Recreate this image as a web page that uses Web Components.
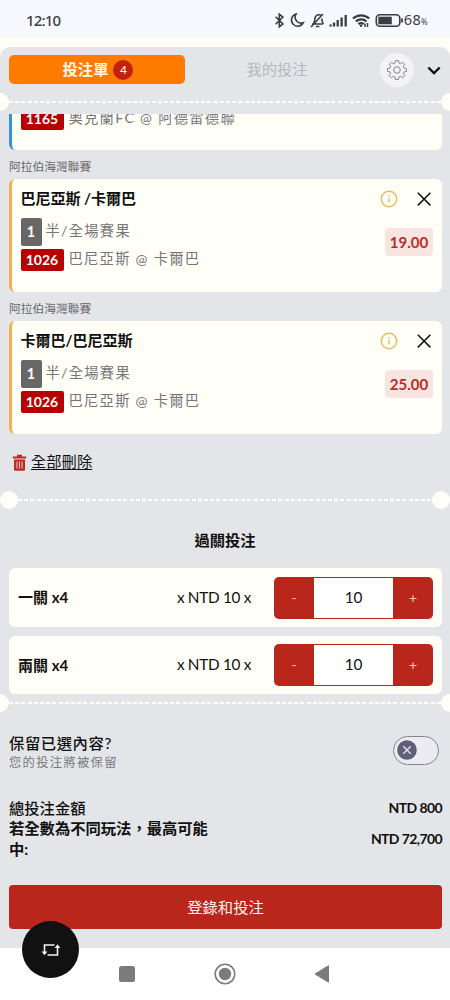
<!DOCTYPE html>
<html lang="zh-Hant">
<head>
<meta charset="utf-8">
<title>投注單</title>
<style>
html,body{margin:0;padding:0}
body{width:450px;height:1000px;overflow:hidden;background:#fffef7;font-family:Lato,"Noto Sans CJK TC",sans-serif;color:#111;font-size:15.3px}
</style>
</head>
<body>
<bet-app></bet-app>
<script>
const define=(name,html)=>{
  const t=document.createElement('template');
  t.innerHTML='<style>*{box-sizing:border-box}:host{display:block;box-sizing:border-box;white-space:nowrap}svg{display:block}</style>'+html;
  customElements.define(name,class extends HTMLElement{
    constructor(){super();this.attachShadow({mode:'open'}).appendChild(t.content.cloneNode(true));}
  });
};

define('status-bar',`<style>
:host{display:flex;height:38px;background:#f8f9fe;padding:2px 22px 0 26px;align-items:center;justify-content:space-between;font:500 15px/20px "Noto Sans",sans-serif;letter-spacing:-.8px;color:#3c3d43}
.p{font:14.5px/20px "Noto Sans",sans-serif;letter-spacing:.3px;margin-left:-2px}.p small{font-size:8px}
.r{display:flex;align-items:center}
</style><span>12:10</span>
<div class="r"><svg width="132" height="20" viewBox="270 10.500 132 20" fill="none" stroke="#3c3d43" stroke-width="1.600">
<path d="M271.6 17.2l7.3 7.2-3.6 3V14.6l3.6 3-7.3 7.2"/>
<path d="M292 14.6a6.2 6.2 0 1 0 7.3 8.6 6 6 0 0 1-7.3-8.6z"/>
<path d="M308 24.500h11M309.500 24c1.5-1.5 1-5 2-6.800a3.900 3.900 0 0 1 6-.9M317.800 19c.2 2 .2 3.900 1.600 5.500M311.800 27h3.600M307 27.500l12-13"/>
<path stroke-width="2.300" d="M326.600 25v2M330 23v4M333.700 20.500V27M337.600 18v9M341.700 15.500V27"/>
<path stroke-width="2.200" d="M349 19c4.600-4.300 11.600-4.300 16.200 0M351.800 22c3-2.800 7.800-2.800 10.700 0M354.400 24.700c1.600-1.400 3.700-1.400 5.300 0"/>
<path stroke-width="1.500" d="M361 24v3.500M363.500 23.500v4"/><circle cx="357" cy="26.300" r="1.200" fill="#3c3d43" stroke="none"/>
<rect x="372.300" y="15.300" width="23.500" height="11.400" rx="3.500"/><path d="M374.300 17.200h13.500v7.600h-13.500z" fill="#3c3d43" stroke="none"/><path d="M398 19v4" stroke-width="1.800"/></svg>
<span class="p">68<small>%</small></span></div>`);

define('tear-line',`<style>
:host{display:flex;align-items:center;justify-content:space-between;height:18px}
i{width:18px;height:18px;border-radius:50%;background:#fffef7;flex:none}
i:first-of-type{margin-left:-9px}i:last-of-type{margin-right:-9px}
:host([inset]) i{margin:0}
b{flex:1;height:2.500px;background:repeating-linear-gradient(90deg,#fffef8 0 4px,transparent 4px 6.200px)}
</style><i></i><b></b><i></i>`);

define('tab-bar',`<style>
:host{display:flex;height:46px;padding:8px 9px 0 9px;align-items:flex-start}
.a{width:176px;height:29px;border-radius:5px;background:#ff7b00;color:#fffaf0;font-weight:700;display:flex;align-items:center;justify-content:center;gap:5px;padding-left:2px}
.a span{margin-top:-1px;line-height:24px}
.a b{width:20px;height:20px;border-radius:50%;background:#c3200f;font-size:12px;line-height:20px;text-align:center;font-weight:400}
.m{width:184px;text-align:center;color:#b6b8bc;line-height:29px}
.g{width:34px;height:34px;margin:-2px 0 0 11px;border-radius:50%;background:#f3f3f5;display:flex;align-items:center;justify-content:center}
.v{margin:9px 0 0 13px}
</style><div class="a"><span>投注單</span><b>4</b></div><div class="m">我的投注</div>
<div class="g"><svg width="22" height="22" viewBox="-11 -11 22 22" fill="none" stroke="#85868a" stroke-width="1"><path id="gear"/><circle r="3.300"/></svg></div>
<svg class="v" width="14" height="13" viewBox="0 0 14 13" fill="none" stroke="#111" stroke-width="2.400"><path d="M1.300 3.500 7 9l5.700-5.500"/></svg>`);

define('league-name',`<style>:host{height:29px;padding:4px 0 0 9px;font-size:11.750px;line-height:26px;color:#66676a}</style><slot></slot>`);

const matchStyle=`.l{display:flex;align-items:center;color:#77767a;font-size:14.300px;letter-spacing:1.250px;height:22px}
.l.q{height:28px;margin-bottom:3px}
.t{line-height:20px;margin-top:-3px}
.k{background:#676767;color:#fff;font-weight:700;letter-spacing:0;border-radius:2px;width:21px;height:28px;line-height:28px;text-align:center;margin-right:4px}
.n{background:#b90000;color:#fff;font-weight:700;letter-spacing:0;border-radius:2px;width:43px;height:22px;line-height:22px;text-align:center;margin-right:5px;font-size:14px}`;

define('bet-card',`<style>
:host{height:113px;margin:0 8px 0 9px;border-radius:6px;background:#fffef7;border-left:3px solid #efb152;padding:8px 9px 0 8.500px;display:flex;justify-content:space-between}
h3{margin:0 0 9px;font-size:15.100px;letter-spacing:-.1px;line-height:22px;font-weight:700;color:#111}
${matchStyle}
.r{display:flex;flex-direction:column;align-items:flex-end}
.i{display:flex;gap:17px;align-items:center;height:23px}
.o{margin-top:18px;width:48px;height:28px;border-radius:4px;background:#f8e5e1;color:#b72d28;font-weight:700;font-size:15px;line-height:28px;text-align:center}
</style><div><h3><slot name="pick"></slot></h3>
<div class="l q"><span class="k">1</span><span class="t"><slot name="market"></slot></span></div>
<div class="l"><span class="n"><slot name="no"></slot></span><span class="t"><slot></slot></span></div></div>
<div class="r"><div class="i"><svg width="18" height="18" viewBox="0 0 18 18" fill="none" stroke="#e6bd67" stroke-width="1.500"><circle cx="9" cy="9" r="7.700"/><path d="M9 8.200v4.300M9 5.300v1.500"/></svg><svg width="18" height="18" viewBox="0 0 18 18" stroke="#111" stroke-width="1.500"><path d="M2.800 2.800l12.600 12.600M15.400 2.800 2.800 15.400"/></svg></div><div class="o"><slot name="odds"></slot></div></div>`);

define('scrolled-card',`<style>
:host{display:flex;align-items:flex-start;height:36px;margin:0 8px 0 9px;border-radius:0 0 6px 6px;background:#fffef7;border-left:3px solid #3991d0;padding-left:8.500px}
${matchStyle}
.l{margin-top:-6px}
</style><div class="l"><span class="n"><slot name="no"></slot></span><span class="t"><slot></slot></span></div>`);

define('bet-list',`<style>
:host{height:377px;overflow:hidden}
.del{display:flex;gap:4px;align-items:center;padding:0 0 0 12px;height:24px;margin-top:16px;text-decoration:underline;text-underline-offset:2px;color:#111}
.del span{margin-top:-3px;line-height:24px}
</style>
<scrolled-card><span slot="no">1165</span>奧克蘭FC @ 阿德雷德聯</scrolled-card>
<league-name>阿拉伯海灣聯賽</league-name>
<bet-card><span slot="pick">巴尼亞斯 /卡爾巴</span><span slot="market">半/全場賽果</span><span slot="no">1026</span>巴尼亞斯 @ 卡爾巴<span slot="odds">19.00</span></bet-card>
<league-name>阿拉伯海灣聯賽</league-name>
<bet-card><span slot="pick">卡爾巴/巴尼亞斯</span><span slot="market">半/全場賽果</span><span slot="no">1026</span>巴尼亞斯 @ 卡爾巴<span slot="odds">25.00</span></bet-card>
<div class="del"><svg width="15" height="17" viewBox="0 0 15 17"><path d="M.8 2.600h4.200V.8h5v1.800h4.200v2H.8zM2 5.500h11V15.500a1.200 1.200 0 0 1-1.200 1.200H3.200A1.200 1.200 0 0 1 2 15.500z" fill="#c02a24"/><path d="M5 7.500v7M7.500 7.500v7M10 7.500v7" stroke="#f0c8c4" stroke-width="1"/></svg><span>全部刪除</span></div>`);

define('stake-row',`<style>
:host{display:flex;height:59px;margin:0 8px 0 9px;border-radius:6px;background:#fffef7;align-items:center;padding:0 9px}
b{flex:1;font-size:15px;margin-top:-2px}.x{margin:-2px 23px 0 0;font-size:15.300px;letter-spacing:-.3px}
.s{display:flex;width:159px;height:42px;border-radius:5px;background:#b9261b;padding:1px 0}
.s span{width:40px;text-align:center;line-height:40px;color:#f5c9c0;font-size:14px}
.s div{flex:1;background:#fff;line-height:39px;text-align:center;font-size:15.300px}
</style><b><slot></slot></b><span class="x">x NTD 10 x</span><div class="s"><span>-</span><div>10</div><span>+</span></div>`);

define('keep-toggle',`<style>
:host{display:flex;justify-content:space-between;padding:0 11px 0 9px;height:40px}
.t{font-size:15.300px;letter-spacing:.6px;line-height:20px;font-weight:500}.u{font-size:12.300px;letter-spacing:1.300px;line-height:19px;color:#77787c}
.w{margin-top:3px;width:46px;height:29px;border:1.500px solid #85838e;border-radius:15px;padding:3px;background:#ebebf1}
</style><div><div class="t">保留已選內容?</div><div class="u">您的投注將被保留</div></div>
<div class="w"><svg width="20" height="20" viewBox="0 0 20 20"><circle cx="10" cy="10" r="9.800" fill="#615f77"/><path d="M6.300 6.300l7.400 7.400M13.700 6.300l-7.400 7.400" stroke="#dddce8" stroke-width="1.500"/></svg></div>`);

define('bet-totals',`<style>
:host{padding:1px 8px 0 9px;display:grid;grid-template-columns:208px 1fr;line-height:20.300px;height:62px}
.a{font-weight:500}.b{font-weight:700;white-space:normal;width:205px}
.v{font-weight:700;text-align:right;font-size:14px;letter-spacing:-.6px}.c{align-self:center}
</style><div class="a">總投注金額</div><div class="v">NTD 800</div><div class="b">若全數為不同玩法，最高可能中:</div><div class="v c">NTD 72,700</div>`);

define('nav-bar',`<style>
:host{height:52px;background:#fff;display:flex;align-items:center;padding-left:117px}
</style><svg width="216" height="24" viewBox="117 0 216 24"><rect x="119" y="4" width="16" height="16" rx="2.500" fill="#7b7b7b"/><circle cx="225" cy="12" r="9.800" fill="none" stroke="#7b7b7b" stroke-width="1.600"/><circle cx="225" cy="12" r="6.200" fill="#7b7b7b"/><path d="M315 12 328.500 3.700v16.600z" fill="#7b7b7b" stroke="#7b7b7b" stroke-linejoin="round"/></svg>`);

define('bet-app',`<style>
:host{width:450px;height:1000px;overflow:hidden;position:relative}
.panel{margin-top:9px;height:901px;background:#e4e5e8;border-radius:10px 10px 0 0;display:flex;flex-direction:column;overflow:hidden}
.panel>*{flex:none}
bet-list{margin-top:3px}
h2{margin:20px 0 17px;font-size:15.300px;line-height:22px;text-align:center}
stake-row+stake-row{margin-top:9px;height:58px}
keep-toggle{margin-top:21px}
bet-totals{margin-top:24px}
.go{margin:26px 8px 0 9px;height:44px;border-radius:4px;background:#b9261b;color:#fff3ec;line-height:44px;text-align:center}
.fab{position:absolute;left:22px;top:921px;width:57px;height:57px;border-radius:50%;background:#111;display:flex;align-items:center;justify-content:center}
</style><status-bar></status-bar><div class="panel"><tab-bar></tab-bar><tear-line></tear-line><bet-list></bet-list><tear-line inset></tear-line><h2>過關投注</h2><stake-row>一關 x4</stake-row><stake-row>兩關 x4</stake-row><tear-line></tear-line><keep-toggle></keep-toggle><bet-totals></bet-totals><div class="go">登錄和投注</div></div><nav-bar></nav-bar>
<div class="fab"><svg width="20" height="14" viewBox="0 0 20 14" fill="none" stroke="#f3f3f3" stroke-width="1.600"><path d="M13.500 2H3.500v8M6.500 12H16.500V4"/><path d="M.6 8.500h5.800L3.500 12.200zM13.600 5h5.800L16.500 1.300z" fill="#f3f3f3" stroke="none"/></svg></div>`);

/* Gear outline: eight rounded teeth around the hub. */
const gear=document.querySelector('bet-app').shadowRoot.querySelector('tab-bar').shadowRoot.querySelector('#gear');
let d='';
for(let k=0;k<8;k++)[[-15,7.3],[-9,9.6],[9,9.6],[15,7.3]].forEach(([o,r])=>{
  const a=(k*45+o)*Math.PI/180;d+=(d?'L':'M')+(r*Math.cos(a)).toFixed(2)+' '+(r*Math.sin(a)).toFixed(2);
});
gear.setAttribute('d',d+'Z');gear.setAttribute('stroke-linejoin','round');
</script>
</body>
</html>
